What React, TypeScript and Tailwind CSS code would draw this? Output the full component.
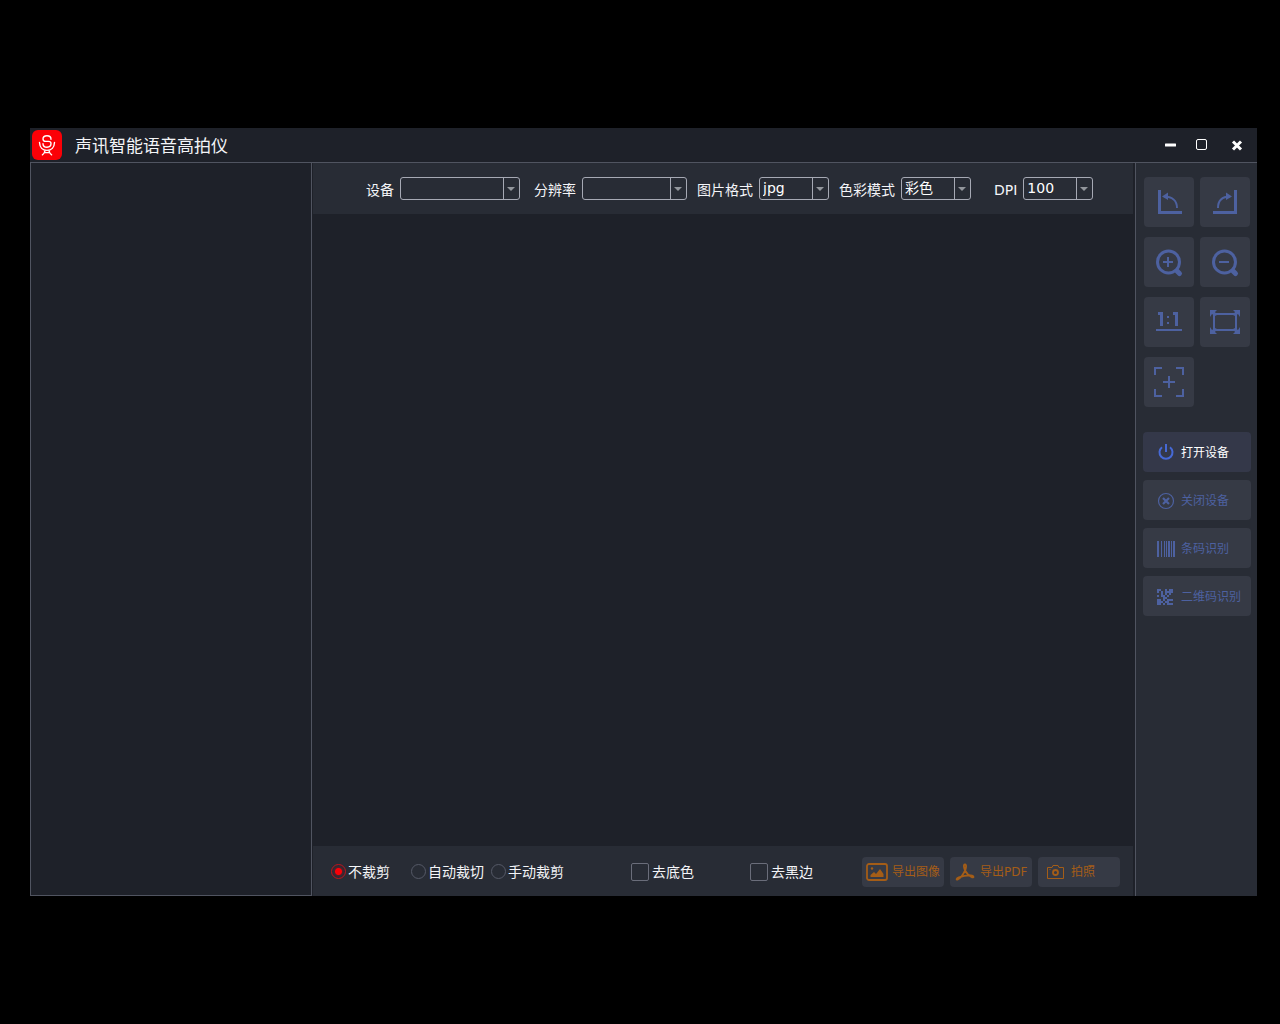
import { useState, type ReactNode } from 'react';

function Logo() {
  return (
    <svg viewBox="0 0 30 30" className="size-[30px] shrink-0" aria-hidden="true">
      <rect width="30" height="30" rx="6" fill="#fb0007" />
      <g fill="none" stroke="#fff" strokeWidth="1.4" strokeLinecap="round" strokeLinejoin="round">
        <path d="M19 9.200C19 7 17.400 5.700 15 5.700S11 7.200 11 9c0 1.600 1 2.400 2.600 2.400h2.900c1.600 0 2.500.8 2.500 2.100 0 2.100-1.600 3.700-4 3.700s-4-1.500-4-3.500" />
        <path d="M7.500 12.500c.2 4.800 3.100 7.900 7.500 7.900s7.300-3.100 7.500-7.900" />
        <path d="M13 20.600c-.2 1.800-1 3.200-2.600 4.200M17 20.600c.2 1.800 1 3.200 2.600 4.200M12.500 22.600h5" />
      </g>
    </svg>
  );
}

type FieldProps = { id: string; label: string; options: string[]; width: string };

function SelectField({ id, label, options, width }: FieldProps) {
  return (
    <div className="flex items-center gap-[6px]">
      <label htmlFor={id} className="whitespace-nowrap pt-[2px] text-sm">
        {label}
      </label>
      <div className={`relative h-[23px] ${width}`}>
        <select
          id={id}
          className="block h-full w-full appearance-none rounded-[3px] border border-[#a6a9b4] bg-transparent pb-[2px] pl-[3px] pr-4 text-sm leading-5 text-white outline-none"
        >
          {options.map((o) => (
            <option key={o} className="bg-[#282c35]">
              {o}
            </option>
          ))}
        </select>
        <span className="pointer-events-none absolute inset-y-0 right-0 flex w-[17px] items-center border-l border-[#a6a9b4] pl-[3px]">
          <svg viewBox="0 0 8 4" className="h-1 w-2" aria-hidden="true">
            <path d="M0 0h8L4 4z" fill="#92969c" />
          </svg>
        </span>
      </div>
    </div>
  );
}

function ToolButton({ label, children }: { label: string; children: ReactNode }) {
  return (
    <button
      type="button"
      aria-label={label}
      className="flex size-[50px] items-center justify-center rounded bg-[#363a45] text-[#4d61a0]"
    >
      <svg viewBox="0 0 50 50" className="size-[50px]" fill="none" stroke="currentColor" aria-hidden="true">
        {children}
      </svg>
    </button>
  );
}

function SideButton({ label, active, icon }: { label: string; active?: boolean; icon: ReactNode }) {
  return (
    <button
      type="button"
      className={`flex h-10 w-full items-center gap-[6px] rounded pl-[14px] pt-px text-xs ${
        active ? 'bg-[#343849] text-white' : 'bg-[#363a45] text-[#4d61a0]'
      }`}
    >
      <svg viewBox="0 0 18 18" className="size-[18px] shrink-0" fill="none" stroke="currentColor" aria-hidden="true">
        {icon}
      </svg>
      <span className="whitespace-nowrap pt-px">{label}</span>
    </button>
  );
}

function ActionButton({ label, children, pad }: { label: string; children: ReactNode; pad: string }) {
  return (
    <button
      type="button"
      className={`flex h-[30px] w-[82px] items-center rounded bg-[#363a45] text-xs text-[#a45d17] ${pad}`}
    >
      {children}
      <span className="whitespace-nowrap">{label}</span>
    </button>
  );
}

function CropRadio({ label, checked, onChange }: { label: string; checked: boolean; onChange: () => void }) {
  return (
    <label className="flex items-center gap-[2px] whitespace-nowrap">
      <input
        type="radio"
        name="crop"
        checked={checked}
        onChange={onChange}
        className="size-[15px] appearance-none rounded-full border border-[#555967] checked:border-[#c1131c] checked:bg-[radial-gradient(circle,#fb0007_0_3px,#50202a_4px,transparent_6px)]"
      />
      <span>{label}</span>
    </label>
  );
}

function CheckField({ label }: { label: string }) {
  return (
    <label className="flex items-center gap-[3px] whitespace-nowrap">
      <input
        type="checkbox"
        className="size-[18px] appearance-none rounded-[2px] border border-[#6a6d7a] checked:bg-[#a6a9b4]"
      />
      <span className="pt-px">{label}</span>
    </label>
  );
}

const QR_CELLS = [
  '11001011',
  '10101111',
  '00101010',
  '10110100',
  '00011000',
  '11010111',
  '11101100',
  '11010111',
];

export default function App() {
  const [crop, setCrop] = useState('不裁剪');

  return (
    <div className="flex h-screen flex-col bg-black pb-32 pl-[30px] pr-[23px] pt-32 font-['DejaVu_Sans','Noto_Sans_CJK_SC',sans-serif] text-sm text-[#f4f5f8]">
      <header className="flex h-[34px] shrink-0 items-center bg-[#1e2129] pl-[2px] pr-[13px]">
        <Logo />
        <h1 className="ml-[13px] pt-[2px] text-[17px] leading-6">声讯智能语音高拍仪</h1>
        <div className="ml-auto flex items-center gap-[18px] text-white">
          <button type="button" aria-label="最小化">
            <svg viewBox="0 0 14 14" className="size-[14px]" aria-hidden="true">
              <rect x="1" y="5.500" width="11" height="3" rx=".5" fill="currentColor" />
            </svg>
          </button>
          <button type="button" aria-label="最大化">
            <svg viewBox="0 0 12 14" className="h-[14px] w-3" aria-hidden="true">
              <rect x="0.500" y="1.500" width="10" height="10" rx="1.500" fill="none" stroke="currentColor" />
            </svg>
          </button>
          <button type="button" aria-label="关闭" className="pl-[4px]">
            <svg viewBox="0 0 14 14" className="size-[14px]" aria-hidden="true">
              <path d="m3 3.500 8 8m0-8-8 8" stroke="currentColor" strokeWidth="3" />
            </svg>
          </button>
        </div>
      </header>

      <div className="flex min-h-0 flex-1 border-t border-[#505460] bg-[#1e2129]">
        <aside className="w-[282px] shrink-0 border-x border-b border-[#505460]" />

        <main className="flex min-w-0 flex-1 flex-col pl-px pr-[2px]">
          <div className="flex h-[51px] shrink-0 items-center bg-[#282c35] pl-[53px]">
            <SelectField id="device" label="设备" options={['']} width="w-[120px]" />
            <div className="ml-[14px] flex gap-[10px]">
              <SelectField id="resolution" label="分辨率" options={['']} width="w-[105px]" />
              <SelectField id="format" label="图片格式" options={['jpg', 'png', 'bmp']} width="w-[70px]" />
              <SelectField id="color" label="色彩模式" options={['彩色', '灰度', '黑白']} width="w-[70px]" />
            </div>
            <div className="ml-[23px]">
              <SelectField id="dpi" label="DPI" options={['100', '200', '300']} width="w-[70px]" />
            </div>
          </div>

          <div className="flex-1" />

          <div className="flex h-[50px] shrink-0 items-center bg-[#282c35] pl-[18px] pr-[13px] pt-px">
            <div className="flex items-center">
              <div className="w-20">
                <CropRadio label="不裁剪" checked={crop === '不裁剪'} onChange={() => setCrop('不裁剪')} />
              </div>
              <div className="w-20">
                <CropRadio label="自动裁切" checked={crop === '自动裁切'} onChange={() => setCrop('自动裁切')} />
              </div>
              <CropRadio label="手动裁剪" checked={crop === '手动裁剪'} onChange={() => setCrop('手动裁剪')} />
            </div>
            <div className="ml-[67px] flex gap-14">
              <CheckField label="去底色" />
              <CheckField label="去黑边" />
            </div>
            <div className="ml-auto flex gap-[6px]">
              <ActionButton label="导出图像" pad="pl-1 gap-[4px]">
                <svg viewBox="0 0 22 18" className="h-[18px] w-[22px] shrink-0" aria-hidden="true">
                  <rect x="1" y="1" width="20" height="16" rx="2" fill="none" stroke="currentColor" strokeWidth="1.800" />
                  <path d="M4.500 14v-2l3.500-3 2 2 4-5 3.500 5v3z" fill="currentColor" />
                  <circle cx="6" cy="5.500" r="1.200" fill="currentColor" />
                </svg>
              </ActionButton>
              <ActionButton label="导出PDF" pad="pl-[5px] gap-[5px]">
                <svg viewBox="0 0 20 18" className="h-[18px] w-5 shrink-0" fill="none" stroke="currentColor" strokeWidth="1.800" strokeLinejoin="round" aria-hidden="true">
                  <path d="M10 1.500c-2 0-.8 4 .2 6.200 1.300 2.700 3.800 5.300 7 6.600 2 .8 1.800-1.800-1.200-1.900-4-.2-8.500.7-12.200 2-2.600 1-2.800 2.800-1 2 3-1.400 5.600-5.400 7.300-9 1-2.200 1.600-5.900-.1-5.900z" />
                </svg>
              </ActionButton>
              <ActionButton label="拍照" pad="pl-[9px] gap-[7px]">
                <svg viewBox="0 0 17 16" className="h-4 w-[17px] shrink-0" fill="none" stroke="currentColor" aria-hidden="true">
                  <path d="M.5 3.500H5l1-2h5l1 2h4.500v11H.5z" />
                  <circle cx="8.500" cy="8.500" r="2.500" strokeWidth="1.800" />
                  <path d="M2.500 5.500h1" />
                </svg>
              </ActionButton>
            </div>
          </div>
        </main>

        <aside className="w-[122px] shrink-0 border-l border-[#505460] bg-[#282c35] px-[6px] pl-[7px] pt-[14px]">
          <div className="grid grid-cols-[50px_50px] gap-x-[6px] gap-y-[10px] pl-px">
            <ToolButton label="向左旋转">
              <path d="M15.500 13v22.500H38" strokeWidth="3" />
              <path d="M20 19.500c8 0 13 4 13 11.500" strokeWidth="2" />
              <path d="m18 19.500 6-4v7.500z" fill="currentColor" stroke="none" />
            </ToolButton>
            <ToolButton label="向右旋转">
              <path d="M35.500 13v22.500H13" strokeWidth="3" />
              <path d="M30 19.500c-8 0-12 4-12 11.500" strokeWidth="2" />
              <path d="m32 19.500-6-4v7.500z" fill="currentColor" stroke="none" />
            </ToolButton>
            <ToolButton label="放大">
              <circle cx="24.500" cy="25" r="11" strokeWidth="3" />
              <path d="M19 25h10M24 20v10" strokeWidth="2" />
              <path d="m33 34 2.500 2.500" strokeWidth="5" strokeLinecap="round" />
            </ToolButton>
            <ToolButton label="缩小">
              <circle cx="24.500" cy="25" r="11" strokeWidth="3" />
              <path d="M19 25h10" strokeWidth="2" />
              <path d="m33 34 2.500 2.500" strokeWidth="5" strokeLinecap="round" />
            </ToolButton>
            <ToolButton label="原始大小">
              <path d="M14 16.500h3.500V29M29 16.500h3.500V29" strokeWidth="3" />
              <path d="M24 19v2M24 25v2" strokeWidth="2" />
              <path d="M12 33h26" strokeWidth="2" />
            </ToolButton>
            <ToolButton label="适应窗口">
              <path d="M14 17h22v16H14z" strokeWidth="2" />
              <path d="M10 13h7l-2 2 2 3-2 1-3-2-2 3zM40 13h-7l2 2-2 3 2 1 3-2 2 3zM10 37h7l-2-2 2-3-2-1-3 2-2-3zM40 37h-7l2-2-2-3 2-1 3 2 2-3z" fill="currentColor" stroke="none" />
            </ToolButton>
            <ToolButton label="居中对焦">
              <path d="M11 18v-7h7M32 11h7v7M39 32v7h-7M18 39h-7v-7M19 25h12M25 19v12" strokeWidth="2" />
            </ToolButton>
          </div>

          <div className="mt-[25px] flex flex-col gap-2">
            <SideButton
              label="打开设备"
              active
              icon={
                <g stroke="#4669d6" strokeWidth="2">
                  <path d="M5 3.200a6.500 6.500 0 1 0 8 0" />
                  <path d="M9 0v8" />
                </g>
              }
            />
            <SideButton
              label="关闭设备"
              icon={
                <>
                  <circle cx="9" cy="9" r="7.500" strokeWidth="1.200" />
                  <path d="m6 6 6 6m0-6-6 6" strokeWidth="2.200" />
                </>
              }
            />
            <SideButton
              label="条码识别"
              icon={
                <>
                  <path d="M1 1v16M12 1v16" strokeWidth="2" />
                  <path d="M4.500 1v16M7.500 1v16M9.500 1v16M14.500 1v16" strokeWidth="1" />
                  <path d="M17 1v16" strokeWidth="2" />
                </>
              }
            />
            <SideButton
              label="二维码识别"
              icon={
                <g fill="currentColor" stroke="none">
                  {QR_CELLS.flatMap((row, y) =>
                    [...row].map((c, x) =>
                      c === '1' ? <rect key={`${x}-${y}`} x={x * 2} y={1 + y * 2} width="2" height="2" /> : null,
                    ),
                  )}
                </g>
              }
            />
          </div>
        </aside>
      </div>
    </div>
  );
}
